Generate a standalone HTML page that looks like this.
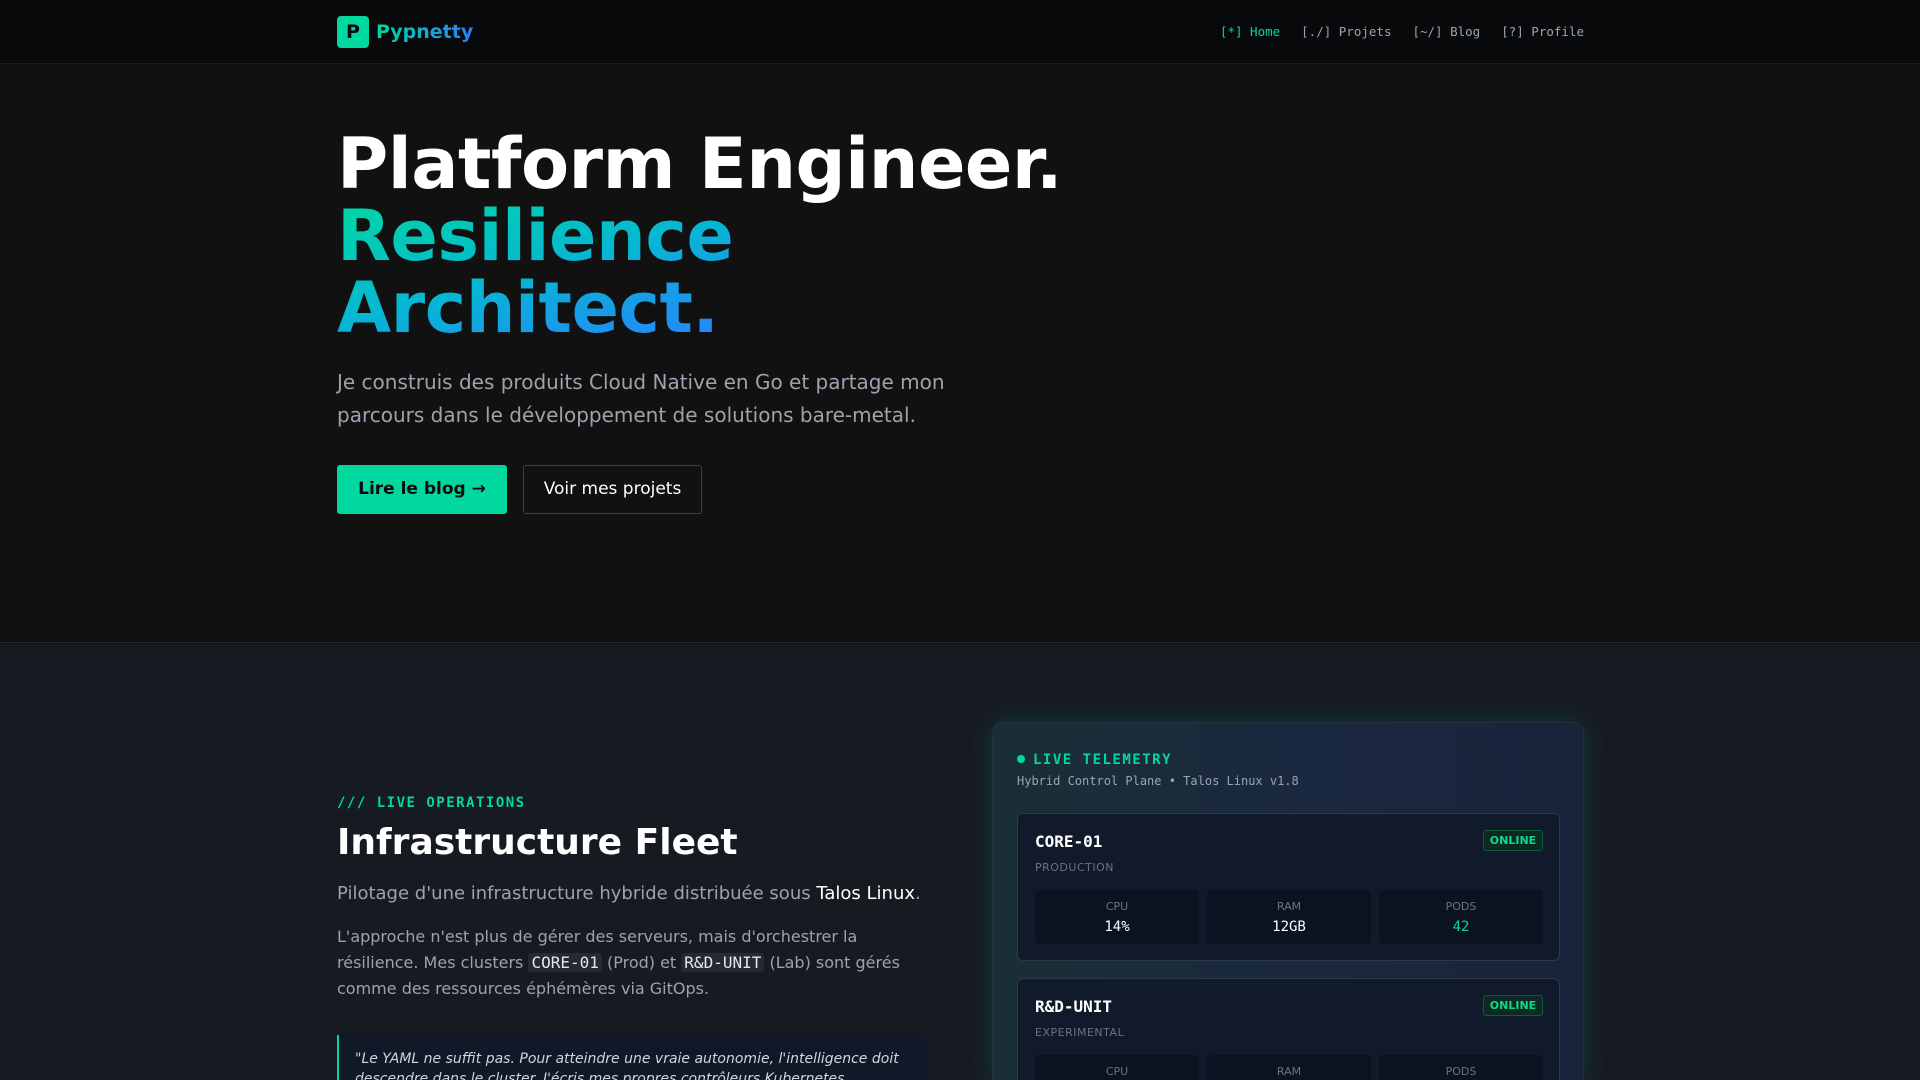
<!DOCTYPE html>
<html><head><meta charset="utf-8"><style>
*{margin:0;padding:0;box-sizing:border-box}
html{width:1920px;height:1080px;overflow:hidden}
body{width:1920px;height:1080px;overflow:hidden;position:relative;background:#111111;font-family:"DejaVu Sans","Liberation Sans",sans-serif;color:#fff}
.mono{font-family:"DejaVu Sans Mono","Liberation Mono",monospace}
nav{position:absolute;left:0;top:0;width:1920px;height:64px;background:#08090b;border-bottom:1px solid #161b24}
.logo{position:absolute;left:337px;top:16px;width:32px;height:32px;background:#00d8a0;border-radius:4px;color:#0a0a0a;font-weight:bold;font-size:19px;text-align:center;line-height:32px}
.brand{position:absolute;left:376px;top:18px;font-size:19px;font-weight:bold;background:linear-gradient(90deg,#00d8a0,#2b7fff);-webkit-background-clip:text;color:transparent;line-height:28px}
.links{position:absolute;right:336px;top:24px;font-size:12.5px;color:#9ca3af;line-height:16px}
.links span{margin-left:21px}
.hero{position:absolute;left:0;top:65px;width:1920px;height:578px;background:#111111;border-bottom:1px solid #262b33}
h1{position:absolute;left:337px;top:128px;font-size:70px;line-height:72px;font-weight:bold;letter-spacing:-0.5px}
.grad{background:linear-gradient(165deg,#00d8a0 0%,#06b6d4 50%,#2b7fff 100%);-webkit-background-clip:text;color:transparent;display:inline-block}
.lead{position:absolute;left:337px;top:366px;width:640px;font-size:20px;line-height:33px;color:#9ca3af}
.b1{position:absolute;left:337px;top:465px;width:170px;height:49px;background:#00d8a0;border-radius:3px;color:#0a0a0a;font-weight:bold;font-size:17px;line-height:49px;text-align:center}
.b2{position:absolute;left:523px;top:465px;width:179px;height:49px;border:1px solid #3a3f47;border-radius:3px;color:#fff;font-size:17px;line-height:47px;text-align:center}
.sec{position:absolute;left:0;top:644px;width:1920px;height:436px;background:#161a21;overflow:hidden}
.kick{position:absolute;left:337px;top:151px;font-size:14px;font-weight:bold;color:#00d8a0;letter-spacing:1.5px}
h2{position:absolute;left:337px;top:177px;font-size:36px;font-weight:bold;line-height:44px}
.p1{position:absolute;left:337px;top:238px;font-size:18px;color:#9ca3af;line-height:24px}
.p2{position:absolute;left:337px;top:280px;width:600px;font-size:16px;line-height:26px;color:#9ca3af}
code{font-family:"DejaVu Sans Mono",monospace;background:#232a36;color:#e5e7eb;padding:0 3px;border-radius:3px}
.quote{position:absolute;left:337px;top:391px;width:590px;height:45px;overflow:hidden;background:#111827;border-left:2px solid #00d8a0;padding:14px 16px 0;font-style:italic;font-size:14px;line-height:20px;color:#d1d5db}
.panel{position:absolute;left:992px;top:78px;width:592px;height:358px;overflow:hidden;border-radius:10px 10px 0 0;background:linear-gradient(90deg,#1a2f35,#1a2840 55%,#19233a);box-shadow:0 0 28px rgba(0,216,160,0.18);border:1px solid #243040;border-bottom:none}
.tt{position:absolute;left:24px;top:29px;font-size:14px;font-weight:bold;color:#00d8a0;letter-spacing:1.5px}
.tt i{display:inline-block;width:8px;height:8px;border-radius:50%;background:#00d8a0;margin-right:8px;vertical-align:1px}
.ts{position:absolute;left:24px;top:51px;font-size:12px;color:#9ca3af}
.card{position:absolute;left:24px;width:543px;height:148px;background:#111a2a;border:1px solid #2e3849;border-radius:6px}
.cn{position:absolute;left:17px;top:18px;font-size:16px;font-weight:bold}
.cl{position:absolute;left:17px;top:47px;font-size:11px;color:#6b7280;letter-spacing:.5px}
.badge{position:absolute;right:16px;top:16px;width:60px;height:21px;border:1px solid #0b5b3c;background:#0c2a22;color:#10d98a;border-radius:3px;font-size:11px;font-weight:bold;text-align:center;line-height:19px}
.m{position:absolute;top:76px;width:164px;height:54px;background:#0c1320;border-radius:4px;text-align:center}
.m .l{font-size:11px;color:#6b7280;margin-top:10px}
.m .v{font-size:14px;margin-top:6px;font-family:"DejaVu Sans Mono",monospace}
</style></head><body>
<nav><div class="logo">P</div><div class="brand">Pypnetty</div>
<div class="links mono"><span style="color:#00d8a0">[*] Home</span><span>[./] Projets</span><span>[~/] Blog</span><span>[?] Profile</span></div></nav>
<div class="hero"></div>
<h1>Platform Engineer.<br><span class="grad">Resilience<br>Architect.</span></h1>
<div class="lead">Je construis des produits Cloud Native en Go et partage mon parcours dans le développement de solutions bare-metal.</div>
<div class="b1">Lire le blog →</div>
<div class="b2">Voir mes projets</div>
<div class="sec">
<div class="kick mono">/// LIVE OPERATIONS</div>
<h2>Infrastructure Fleet</h2>
<div class="p1">Pilotage d'une infrastructure hybride distribuée sous <span style="color:#fff">Talos Linux</span>.</div>
<div class="p2">L'approche n'est plus de gérer des serveurs, mais d'orchestrer la résilience. Mes clusters <code>CORE-01</code> (Prod) et <code>R&amp;D-UNIT</code> (Lab) sont gérés comme des ressources éphémères via GitOps.</div>
<div class="quote">"Le YAML ne suffit pas. Pour atteindre une vraie autonomie, l'intelligence doit descendre dans le cluster. J'écris mes propres contrôleurs Kubernetes.</div>
<div class="panel">
<div class="tt mono"><i></i>LIVE TELEMETRY</div>
<div class="ts mono">Hybrid Control Plane • Talos Linux v1.8</div>
<div class="card" style="top:90px"><div class="cn mono">CORE-01</div><div class="cl">PRODUCTION</div><div class="badge">ONLINE</div>
<div class="m" style="left:17px"><div class="l">CPU</div><div class="v">14%</div></div>
<div class="m" style="left:189px"><div class="l">RAM</div><div class="v">12GB</div></div>
<div class="m" style="left:361px"><div class="l">PODS</div><div class="v" style="color:#00d8a0">42</div></div></div>
<div class="card" style="top:255px"><div class="cn mono">R&amp;D-UNIT</div><div class="cl">EXPERIMENTAL</div><div class="badge">ONLINE</div>
<div class="m" style="left:17px"><div class="l">CPU</div><div class="v">8%</div></div>
<div class="m" style="left:189px"><div class="l">RAM</div><div class="v">4GB</div></div>
<div class="m" style="left:361px"><div class="l">PODS</div><div class="v" style="color:#00d8a0">17</div></div></div>
</div>
</div>
</body></html>
